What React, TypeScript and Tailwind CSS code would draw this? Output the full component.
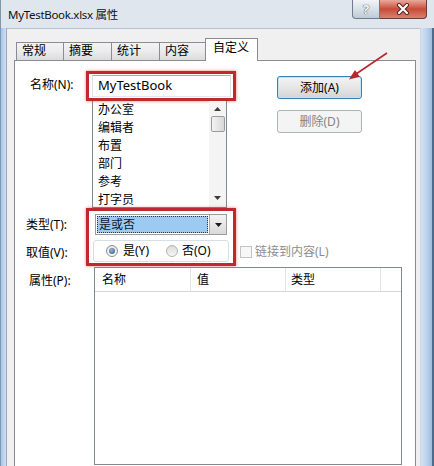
import React from 'react';

const tabs = ['常规', '摘要', '统计', '内容'];
const tabWidths = ['w-[48px]', 'w-[49px]', 'w-[49px]', 'w-[47px]'];
const names = ['办公室', '编辑者', '布置', '部门', '参考', '打字员'];

const Radio: React.FC<{ checked?: boolean }> = ({ checked }) => (
  <span
    className={
      'flex h-[12px] w-[12px] items-center justify-center rounded-full border ' +
      (checked
        ? 'border-[#8a8f96] bg-gradient-to-b from-[#e4e6e9] to-[#f8f8f8]'
        : 'border-[#b0b4b8] bg-gradient-to-b from-[#dcdcdc] to-[#f6f6f6]')
    }
  >
    {checked && (
      <span className="h-[6px] w-[6px] rounded-full bg-[radial-gradient(circle_at_40%_35%,#9bb3d0,#2f527e)]" />
    )}
  </span>
);

const TitleButtons: React.FC = () => (
  <div className="ml-auto mr-[7px] flex">
    <div className="flex h-[19px] w-[28px] items-center justify-center rounded-bl-[4px] border border-t-0 border-[#6f7c8d] bg-gradient-to-b from-[#f1f4f8] via-[#d8e0e9] to-[#c0cad6]">
      <span className="text-[13px] font-bold leading-none text-[#f8f8f8] [text-shadow:0_0_1px_#3f4a58,0_0_1px_#3f4a58]">?</span>
    </div>
    <div className="flex h-[19px] w-[47px] items-center justify-center rounded-br-[4px] border border-l-0 border-t-0 border-[#6d3a36] bg-gradient-to-b from-[#e9a99c] via-[#c74a3a] to-[#d9806e]">
      <svg width="14" height="12" viewBox="0 0 14 12">
        <path d="M3 2 L11 10 M11 2 L3 10" stroke="#4a2320" strokeWidth="4" strokeLinecap="round" />
        <path d="M3 2 L11 10 M11 2 L3 10" stroke="#ffffff" strokeWidth="2.2" strokeLinecap="round" />
      </svg>
    </div>
  </div>
);

export default function App() {
  return (
    <div className="relative h-[466px] w-[434px] overflow-hidden bg-[#dfe6ee] font-['Noto_Sans','Noto_Sans_CJK_SC',sans-serif] text-[12px] text-black">
      {/* title bar */}
      <div className="flex h-[28px] items-start border-l border-[#8096ad]">
        <span className="ml-[7px] mt-[6px] text-[11.5px] leading-[18px] tracking-[-0.3px] text-[#111]">MyTestBook.xlsx 属性</span>
        <TitleButtons />
      </div>

      <div className="flex h-[438px]">
        <div className="w-[7px] border-l border-[#7d97b4] border-r border-r-[#9aa8b8] bg-gradient-to-r from-[#a9c5e6] to-[#cfe0f3]" />

        <div className="w-[413px] border-t border-[#b7c0cb] bg-[#f0f0f0] pl-[7px] pt-[9px]">
          {/* tabs */}
          <div className="relative z-10 ml-[2px] flex h-[23px] items-end">
            {tabs.map((t, i) => (
              <div
                key={t}
                className={
                  tabWidths[i] +
                  ' h-[19px] border border-[#898c95] bg-gradient-to-b from-[#f3f3f3] via-[#ebebeb] to-[#dcdcdc] pl-[5px] leading-[16px] ' +
                  (i > 0 ? '-ml-px' : '')
                }
              >
                {t}
              </div>
            ))}
            <div className="-ml-px h-[23px] w-[53px] border border-b-0 border-[#898c95] bg-white pl-[7px] pt-[1px] leading-[16px]">
              自定义
            </div>
          </div>

          {/* tab panel */}
          <div className="-mt-px h-[420px] w-[402px] border border-[#898c95] bg-white pl-[11px] pt-[10px]">
            {/* name + list + buttons */}
            <div className="flex">
              <div className="w-[210px]">
                <div className="flex">
                  <span className="mt-[6px] w-[60px] pl-[4px] leading-[16px]">名称(N):</span>
                  <div className="h-[30px] w-[150px] border-[3px] border-[#c1272d] pl-[3px] pt-[1px] shadow-[0_0_3px_rgba(200,40,45,0.6)]">
                    <div className="flex h-[22px] w-[139px] items-center border border-[#abadb3] border-l-[#e2e3ea] border-r-[#dbdfe6] border-b-[#e3e9ef] bg-white pl-[5px] text-[13px]">
                      MyTestBook
                    </div>
                  </div>
                </div>
                <div className="ml-[66px] flex h-[107px] w-[135px] overflow-hidden border border-[#828790] border-t-0 bg-white">
                  <div className="flex-1 pl-[5px]">
                    {names.map((n) => (
                      <div key={n} className="h-[18px] leading-[18px]">
                        {n}
                      </div>
                    ))}
                  </div>
                  <div className="flex w-[17px] flex-col items-center bg-[#f4f4f4]">
                    <svg width="7" height="4" viewBox="0 0 7 4" className="mt-[6px]">
                      <path d="M0 4 L3.5 0 L7 4 Z" fill="#3c3c3c" />
                    </svg>
                    <div className="mt-[5px] h-[16px] w-[14px] rounded-[2px] border border-[#9b9b9b] bg-gradient-to-r from-[#f3f3f3] to-[#d8d8d8]" />
                    <svg width="7" height="4" viewBox="0 0 7 4" className="mt-auto mb-[7px]">
                      <path d="M0 0 L7 0 L3.5 4 Z" fill="#3c3c3c" />
                    </svg>
                  </div>
                </div>
              </div>
              <div className="ml-[41px] mt-[5px] flex flex-col">
                <button className="flex h-[23px] w-[85px] items-center justify-center rounded-[3px] border border-[#3c7fb1] bg-gradient-to-b from-[#f4f4f4] via-[#e6e6e6] to-[#d4d4d4] shadow-[inset_0_0_0_1px_#bfe3f8] text-[12px]">
                  添加(A)
                </button>
                <button className="mt-[11px] flex h-[23px] w-[85px] items-center justify-center rounded-[3px] border border-[#adb2b5] bg-[#f4f4f4] text-[12px] text-[#838383]">
                  删除(D)
                </button>
              </div>
            </div>

            {/* type + value */}
            <div className="flex">
              <div className="flex w-[60px] flex-col">
                <span className="mt-[9px] leading-[16px]">类型(T):</span>
                <span className="mt-[12px] leading-[16px]">取值(V):</span>
              </div>
              <div className="h-[58px] w-[150px] border-[3px] border-[#c1272d] shadow-[0_0_3px_rgba(200,40,45,0.6)]">
                <div className="ml-[6px] mt-[3px] flex h-[21px] w-[132px] border border-[#9c9c9c] bg-white">
                  <div className="m-px flex flex-1 items-center border border-dotted border-[#333] bg-[#9dcaf3] pl-[1px] leading-[15px] text-[#0b1730]">
                    是或否
                  </div>
                  <div className="flex w-[17px] items-center justify-center border-l border-[#a8a8a8] bg-gradient-to-b from-[#f4f4f4] to-[#d9d9d9]">
                    <svg width="7" height="4" viewBox="0 0 7 4">
                      <path d="M0 0 L7 0 L3.5 4 Z" fill="#1c1c1c" />
                    </svg>
                  </div>
                </div>
                <div className="ml-[4px] mt-[5px] flex h-[22px] w-[136px] items-center rounded-[3px] border border-[#d5dfe5] pl-[12px]">
                  <Radio checked />
                  <span className="ml-[5px]">是(Y)</span>
                  <span className="ml-[17px]">
                    <Radio />
                  </span>
                  <span className="ml-[4px]">否(O)</span>
                </div>
              </div>
              <div className="ml-[4px] mt-[36px] flex h-[16px] items-center">
                <span className="h-[12px] w-[12px] border border-[#c4c4c4] bg-[#f7f7f7]" />
                <span className="ml-[3px] text-[#8d8d8d]">链接到内容(L)</span>
              </div>
            </div>

            {/* properties */}
            <div className="mt-[1px] flex">
              <span className="mt-[6px] w-[68px] pl-[3px] leading-[16px]">属性(P):</span>
              <div className="h-[198px] w-[308px] border border-[#828790] bg-white">
                <div className="flex h-[24px] items-center border-b border-[#d5d5d5]">
                  <div className="flex h-full w-[96px] items-center border-r border-[#e3e3e3] pl-[7px]">名称</div>
                  <div className="flex h-full w-[95px] items-center border-r border-[#e3e3e3] pl-[6px]">值</div>
                  <div className="flex h-full w-[95px] items-center border-r border-[#e3e3e3] pl-[5px]">类型</div>
                  <div className="flex-1" />
                </div>
              </div>
            </div>
          </div>
        </div>

        <div className="w-[14px] border-l border-[#c9d6e4] bg-gradient-to-r from-[#d3e2f3] via-[#bcd3ec] to-[#9fbbdb] border-r-2 border-r-[#4f6b8c]" />
      </div>

      {/* annotation arrow */}
      <svg className="pointer-events-none absolute left-0 top-0" width="434" height="466">
        <line x1="387" y1="53" x2="356" y2="74" stroke="#b8262c" strokeWidth="1.6" />
        <polygon points="349,79.5 355,70 359.8,76.8" fill="#b8262c" />
      </svg>
    </div>
  );
}
